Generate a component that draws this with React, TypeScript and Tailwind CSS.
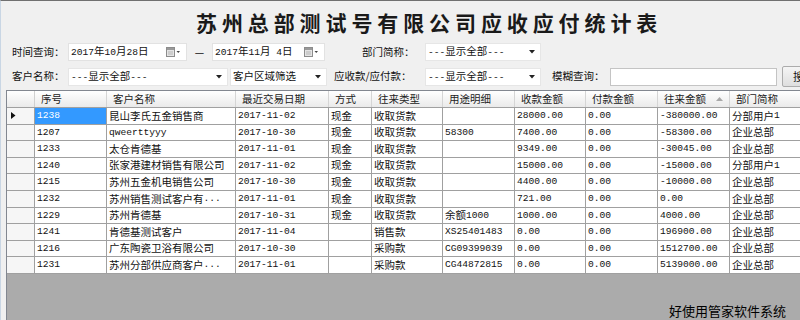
import React from 'react';

const cols = [28, 72, 129, 93, 43, 71, 72, 71, 72, 72, 90];

const headers = ['序号', '客户名称', '最近交易日期', '方式', '往来类型', '用途明细', '收款金额', '付款金额', '往来金额', '部门简称'];

const rows: string[][] = [
  ['1238', '昆山李氏五金销售商', '2017-11-02', '现金', '收取货款', '', '28000.00', '0.00', '-380000.00', '分部用户1'],
  ['1207', 'qweerttyyy', '2017-10-30', '现金', '收取货款', '58300', '7400.00', '0.00', '-58300.00', '企业总部'],
  ['1233', '太仓肯德基', '2017-11-01', '现金', '收取货款', '', '9349.00', '0.00', '-30045.00', '企业总部'],
  ['1240', '张家港建材销售有限公司', '2017-11-02', '现金', '收取货款', '', '15000.00', '0.00', '-15000.00', '分部用户1'],
  ['1215', '苏州五金机电销售公司', '2017-10-30', '现金', '收取货款', '', '4400.00', '0.00', '-10000.00', '企业总部'],
  ['1232', '苏州销售测试客户有...', '2017-11-01', '现金', '收取货款', '', '721.00', '0.00', '0.00', '企业总部'],
  ['1229', '苏州肯德基', '2017-10-31', '现金', '收取货款', '余额1000', '1000.00', '0.00', '4000.00', '企业总部'],
  ['1241', '肯德基测试客户', '2017-11-04', '', '销售款', 'XS25401483', '0.00', '0.00', '196900.00', '企业总部'],
  ['1216', '广东陶瓷卫浴有限公司', '2017-10-30', '', '采购款', 'CG09399039', '0.00', '0.00', '1512700.00', '企业总部'],
  ['1231', '苏州分部供应商客户...', '2017-11-01', '', '采购款', 'CG44872815', '0.00', '0.00', '5139000.00', '企业总部'],
];

// ascii runs look like SimSun half-width, so render them mono and a bit smaller
function T({ s }: { s: string }) {
  const parts = s.split(/([\x20-\x7e]+)/).filter(Boolean);
  return (
    <>
      {parts.map((p, i) =>
        /^[\x20-\x7e]+$/.test(p) ? (
          <span key={i} className="font-['Liberation_Mono',monospace] text-[9.6px] whitespace-pre">
            {p}
          </span>
        ) : (
          <span key={i}>{p}</span>
        )
      )}
    </>
  );
}

function Arrow() {
  return (
    <svg width="6" height="4" viewBox="0 0 6 4" className="shrink-0">
      <path d="M0 0 L6 0 L3 3.5 Z" fill="#222" />
    </svg>
  );
}

function CalIcon() {
  return (
    <svg width="15" height="10" viewBox="0 0 15 10" className="shrink-0">
      <rect x="0.5" y="0.5" width="8" height="9" fill="#e4e4e4" stroke="#8c8c8c" />
      <rect x="1" y="1" width="7" height="2" fill="#9a9a9a" />
      <path d="M2 5 H7 M2 7 H7" stroke="#b5b5b5" strokeWidth="1" />
      <path d="M10.5 4 L14 4 L12.25 6 Z" fill="#444" />
    </svg>
  );
}

function DateBox({ w, value }: { w: string; value: string }) {
  return (
    <div className={`${w} shrink-0 h-[18px] bg-white border border-[#e2e2e2] flex items-center justify-between pl-[2px] pr-[5px]`}>
      <span className="whitespace-nowrap"><T s={value} /></span>
      <CalIcon />
    </div>
  );
}

function Select({ w, value }: { w: string; value: string }) {
  return (
    <div className={`${w} shrink-0 h-[18px] bg-white border border-[#e6e6e6] flex items-center justify-between pl-[2px] pr-[5px]`}>
      <span className="whitespace-nowrap"><T s={value} /></span>
      <Arrow />
    </div>
  );
}

function Label({ cls, text }: { cls: string; text: string }) {
  return <span className={`${cls} shrink-0 whitespace-nowrap`}>{text}</span>;
}

export default function App() {
  return (
    <div className="w-[800px] h-[320px] overflow-hidden bg-[#f0f0f0] border-t border-[#707070] border-l border-l-[#c9d6e4] flex flex-col font-['Noto_Sans_CJK_SC',sans-serif] text-[10.5px] text-[#111] leading-none">
      {/* Title */}
      <div className="h-[42px] shrink-0 flex items-center pl-[195px]">
        <span className="text-[21px] font-bold tracking-[4.9px] text-[#1a1a1a] whitespace-nowrap">苏州总部测试号有限公司应收应付统计表</span>
      </div>

      {/* Row 1 */}
      <div className="h-[18px] shrink-0 flex items-center">
        <Label cls="ml-[11px] w-[56px]" text="时间查询：" />
        <DateBox w="w-[119px]" value="2017年10月28日" />
        <Label cls="w-[25px] text-center" text="—" />
        <DateBox w="w-[113px]" value="2017年11月 4日" />
        <Label cls="ml-[37px] w-[63px]" text="部门简称：" />
        <Select w="w-[116px]" value="---显示全部---" />
      </div>

      {/* Row 2 */}
      <div className="h-[21px] mt-[5px] shrink-0 flex items-center">
        <Label cls="ml-[11px] w-[56px]" text="客户名称：" />
        <Select w="w-[160px]" value="---显示全部---" />
        <div className="ml-[2px] shrink-0">
          <Select w="w-[97px]" value="客户区域筛选" />
        </div>
        <Label cls="ml-[7px] w-[91px]" text="应收款/应付款：" />
        <Select w="w-[116px]" value="---显示全部---" />
        <Label cls="ml-[11px] w-[58px]" text="模糊查询：" />
        <div className="w-[167px] shrink-0 h-[18px] bg-white border border-[#c4c4c4]" />
        <div className="ml-[5px] w-[60px] h-[21px] shrink-0 border border-[#acacac] rounded-[2px] bg-gradient-to-b from-[#f5f5f5] to-[#dedede] flex items-center pl-[10px] text-[11px] whitespace-nowrap">
          搜索
        </div>
      </div>

      {/* Grid */}
      <div className="mt-[3px] ml-[5px] flex-1 flex flex-col border-t border-[#828790] border-l border-l-[#828790] overflow-hidden">
        {/* header */}
        <div className="flex h-[17px] shrink-0 bg-gradient-to-b from-white to-[#eaeaea] border-b border-[#a0a0a0]">
          <div style={{ width: cols[0] }} className="shrink-0 border-r border-[#d0d0d0]" />
          {headers.map((h, i) => (
            <div
              key={h}
              style={{ width: cols[i + 1] }}
              className="shrink-0 border-r border-[#d5d5d5] flex items-center justify-between pl-[6px] pr-[6px] text-[#222] whitespace-nowrap"
            >
              <span>{h}</span>
              {h === '往来金额' && (
                <svg width="7" height="4" viewBox="0 0 7 4">
                  <path d="M0 4 L7 4 L3.5 0 Z" fill="#a8a8a8" />
                </svg>
              )}
            </div>
          ))}
        </div>

        {/* body */}
        {rows.map((r, ri) => (
          <div key={r[0]} className="flex h-[16.6px] shrink-0 bg-white">
            <div
              style={{ width: cols[0] }}
              className="shrink-0 bg-[#f6f6f6] border-r border-b border-[#a0a0a0] flex items-center pl-[4px]"
            >
              {ri === 0 && (
                <svg width="5" height="7" viewBox="0 0 5 7">
                  <path d="M0 0 L4.5 3.5 L0 7 Z" fill="#111" />
                </svg>
              )}
            </div>
            {r.map((c, ci) => (
              <div
                key={ci}
                style={{ width: cols[ci + 1] }}
                className={`shrink-0 border-r border-b border-[#a0a0a0] flex items-center pl-[2px] whitespace-nowrap overflow-hidden ${
                  ri === 0 && ci === 0 ? 'bg-[#3399ff] text-white' : ''
                }`}
              >
                <T s={c} />
              </div>
            ))}
          </div>
        ))}

        {/* empty area */}
        <div className="flex-1 bg-[#ababab] flex items-end justify-end pr-[14px] pb-[3px]">
          <span className="text-[13px] text-black">好使用管家软件系统</span>
        </div>
      </div>
    </div>
  );
}
